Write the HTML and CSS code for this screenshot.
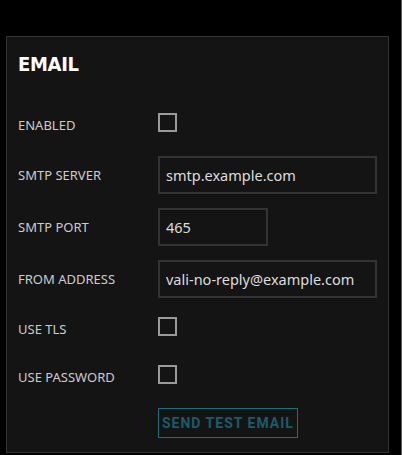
FILE: index.html
```html
<!DOCTYPE html>
<html lang="en">
<head>
    <meta charset="UTF-8">
    <meta name="viewport" content="width=device-width, initial-scale=1.0">
    <title>Email settings</title>
    <link rel="stylesheet" href="styles.css">
</head>
<body>
    <div class="page">
        <div class="panel">
            <h1>EMAIL</h1>

            <div class="row check-row">
                <label for="enabled">ENABLED</label>
                <input type="checkbox" id="enabled">
            </div>
            <div class="row">
                <label for="smtpServer">SMTP SERVER</label>
                <input type="text" id="smtpServer" class="text-input" value="smtp.example.com">
            </div>
            <div class="row">
                <label for="smtpPort">SMTP PORT</label>
                <input type="text" id="smtpPort" class="text-input port" value="465">
            </div>
            <div class="row">
                <label for="fromAddress">FROM ADDRESS</label>
                <input type="text" id="fromAddress" class="text-input" value="vali-no-reply@example.com">
            </div>
            <div class="row check-row">
                <label for="useTls">USE TLS</label>
                <input type="checkbox" id="useTls">
            </div>
            <div class="row check-row">
                <label for="usePassword">USE PASSWORD</label>
                <input type="checkbox" id="usePassword">
            </div>
            <div class="row button-row">
                <button type="button">SEND TEST EMAIL</button>
            </div>
        </div>
    </div>
</body>
</html>
```

FILE: styles.css
```css
html, body {
    margin: 0;
    background: #000;
}
.page {
    width: 402px;
    height: 455px;
    box-sizing: border-box;
    padding: 36px 0 0 6px;
    border-right: 1px solid #5a5a5a;
}
.panel {
    width: 383px;
    height: 417px;
    box-sizing: border-box;
    background: #141414;
    border: 1px solid #333;
    padding: 12px 11px 0 11px;
}
h1 {
    margin: 0 0 29px 0;
    font-family: "DejaVu Sans Condensed", "DejaVu Sans", sans-serif;
    font-weight: bold;
    font-size: 20px;
    line-height: 30px;
    color: #fff;
    letter-spacing: -0.3px;
}
.row {
    display: flex;
    align-items: center;
    margin-bottom: 14px;
    min-height: 38px;
}
.check-row {
    min-height: 34px;
}
.button-row {
    min-height: 30px;
    padding-left: 140px;
}
label {
    width: 140px;
    flex-shrink: 0;
    font-family: "Noto Sans", sans-serif;
    font-size: 13px;
    color: #ccc;
}
input[type="checkbox"] {
    appearance: none;
    margin: 0 0 5px 0;
    width: 19px;
    height: 19px;
    box-sizing: border-box;
    border: 2px solid #9a9a9a;
    background: transparent;
}
.text-input {
    width: 219px;
    height: 38px;
    box-sizing: border-box;
    background: #141414;
    border: 2px solid #333;
    padding: 0 6px;
    font-family: "Noto Sans", sans-serif;
    font-size: 14.5px;
    color: #ddd;
    outline: none;
}
.port {
    width: 110px;
}
button {
    height: 30px;
    padding: 0 3px;
    background: transparent;
    border: 1px solid #157281;
    color: #1a5c68;
    font-family: Roboto, sans-serif;
    font-weight: bold;
    font-size: 14px;
    letter-spacing: 1px;
}
```
